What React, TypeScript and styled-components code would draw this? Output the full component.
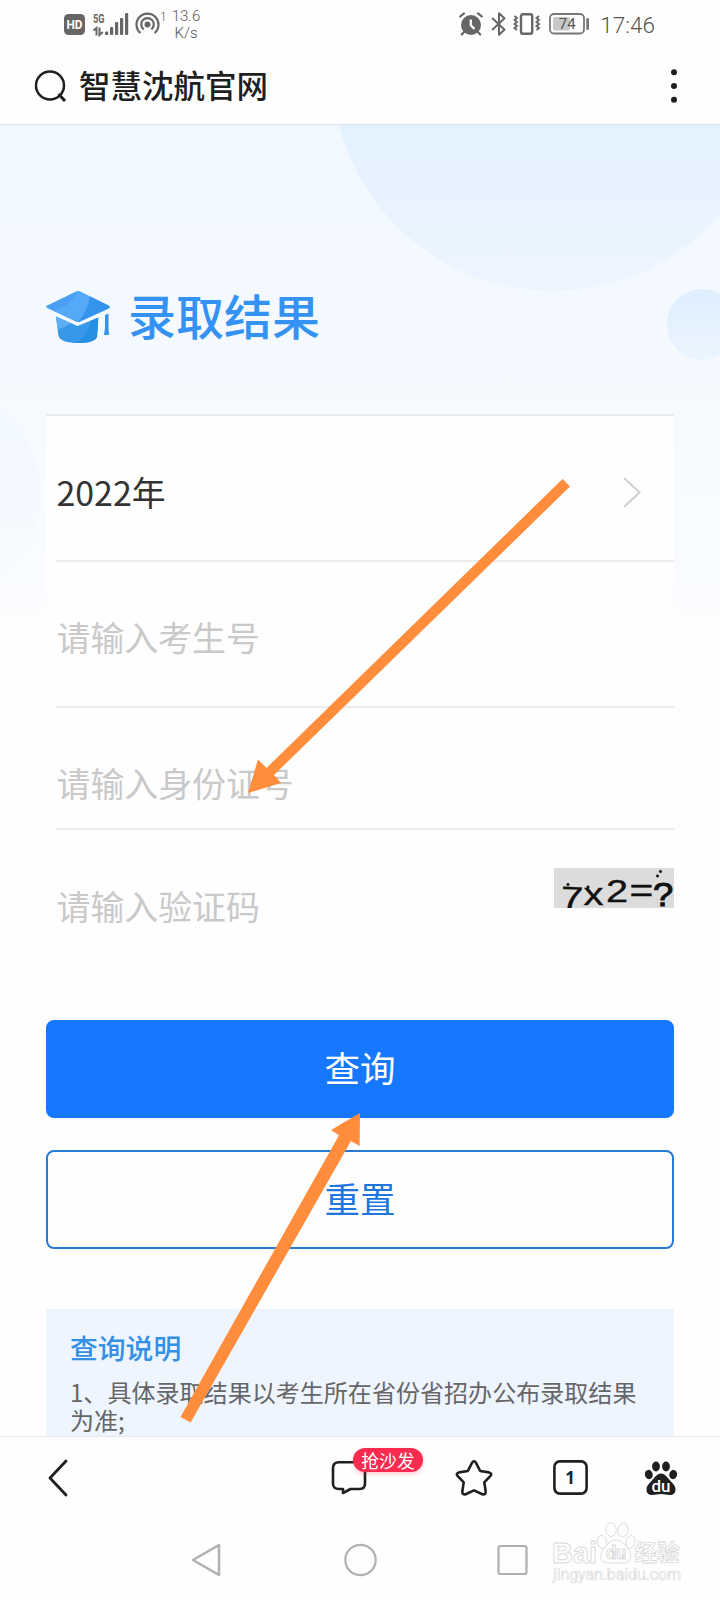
import React from "react";
import styled, { createGlobalStyle } from "styled-components";

const GlobalStyle = createGlobalStyle`
  * { box-sizing: border-box; }
  body {
    margin: 0;
    background: #fefefe;
    font-family: "Noto Sans CJK SC", sans-serif;
  }
  button { font-family: inherit; }
`;

const Screen = styled.div`
  position: relative;
  display: flex;
  flex-direction: column;
  width: 720px;
  height: 1600px;
  overflow: hidden;
  background: #fefefe;
`;

const StatusBar = styled.div`
  display: flex;
  justify-content: space-between;
  align-items: center;
  height: 48px;
  padding: 0 65px 0 63.5px;
  color: #666;
  font-family: Roboto, sans-serif;
`;

const StatusGroup = styled.div`
  display: flex;
  align-items: center;
  height: 48px;
`;

const StatusIcon = styled.svg<{ $gap?: number }>`
  display: block;
  flex: none;
  overflow: visible;
  margin-right: ${(p) => p.$gap ?? 0}px;
`;

const Speed = styled.div`
  display: flex;
  flex-direction: column;
  align-items: center;
  width: 30px;
  margin-top: 2px;
  font-size: 15px;
  font-weight: 300;
  line-height: 17.5px;
  color: #555;
`;

const Clock = styled.span`
  font-size: 22.5px;
  font-weight: 300;
  line-height: 24px;
  color: #555;
  margin-top: 2px;
`;

const Header = styled.header`
  display: flex;
  align-items: center;
  height: 77px;
  padding: 0 42px 0 34px;
  border-bottom: 1px solid #dfe4ea;
`;

const SiteTitle = styled.h1`
  flex: 1;
  margin: -5px 0 0 11px;
  font-size: 31.5px;
  font-weight: 500;
  line-height: 46px;
  color: #1f1f1f;
`;

const Page = styled.main`
  position: relative;
  height: 1311px;
  padding: 0 46px;
  overflow: hidden;
`;

const Backdrop = styled.svg`
  position: absolute;
  inset: 0 auto auto 0;
`;

const Hero = styled.div`
  position: relative;
  display: flex;
  align-items: center;
  height: 289px;
  padding-top: 93px;
`;

const HeroTitle = styled.h2`
  margin: 0 0 0 17px;
  font-size: 48px;
  font-weight: 500;
  line-height: 60px;
  color: #3492f4;
`;

const HeroRow = styled.div`
  display: flex;
  align-items: center;
  height: 60px;
  margin-bottom: 5px;
`;

const Cap = styled.svg`
  margin-top: 6px;
`;

const Form = styled.div`
  position: relative;
  background: #fefefe;
  border-top: 2px solid #ececee;
  height: 542px;
`;

const Field = styled.div<{ $height: number; $shift?: number; $filled?: boolean }>`
  display: flex;
  align-items: center;
  justify-content: space-between;
  height: ${(p) => p.$height}px;
  margin-left: 10px;
  padding-left: 0.5px;
  padding-top: ${(p) => p.$shift ?? 0}px;
  font-size: 33.9px;
  line-height: 44px;
  color: ${(p) => (p.$filled ? "#333" : "#c9c9c9")};
  & + & { border-top: 2px solid #ececee; }
`;

const Chevron = styled.svg`
  margin: 2px 33px 0 0;
`;

const Captcha = styled.svg`
  display: block;
  background: #dcdcdc;
  margin-top: -36px;
`;

const Actions = styled.div`
  position: relative;
  display: flex;
  flex-direction: column;
  gap: 32px;
  margin-top: 64px;
`;

const ActionButton = styled.button<{ $primary?: boolean }>`
  height: ${(p) => (p.$primary ? 98 : 99)}px;
  padding: 0 0 ${(p) => (p.$primary ? 4 : 3)}px;
  border-radius: 8px;
  border: 2px solid ${(p) => (p.$primary ? "#1678ff" : "#2878d4")};
  background: ${(p) => (p.$primary ? "#1678ff" : "#fefefe")};
  color: ${(p) => (p.$primary ? "#fff" : "#1f76df")};
  font-size: 35.5px;
  line-height: 46px;
`;

const Notice = styled.section`
  position: relative;
  height: 140px;
  margin-top: 60px;
  padding: 18px 24px 0;
  background: #eef5fe;
`;

const NoticeTitle = styled.h3`
  margin: 0 0 11px;
  font-size: 27.8px;
  font-weight: 500;
  line-height: 40px;
  color: #3490e6;
`;

const NoticeText = styled.p`
  margin: 0;
  font-size: 24.05px;
  line-height: 28px;
  color: #666;
  white-space: nowrap;
`;

const Toolbar = styled.nav`
  display: flex;
  align-items: center;
  height: 84px;
  padding: 0 42px 2px 47px;
  border-top: 1px solid #e4e6ea;
`;

const Spacer = styled.div`
  flex: 1;
`;

const ChatButton = styled.div`
  position: relative;
  width: 36px;
  height: 36px;
  margin-right: 87px;
`;

const Badge = styled.span`
  position: absolute;
  left: 22px;
  top: -12px;
  width: 70px;
  height: 24.5px;
  border-radius: 12px;
  background: #fb2b50;
  box-shadow: 0 2px 4px rgba(251, 43, 80, 0.25);
  color: #fff;
  font-size: 17.8px;
  line-height: 24px;
  text-align: center;
`;

const ToolIcon = styled.svg<{ $gap?: number }>`
  display: block;
  flex: none;
  margin-right: ${(p) => p.$gap ?? 0}px;
`;

const SystemNav = styled.div`
  display: flex;
  align-items: center;
  justify-content: space-between;
  height: 80px;
  padding: 0 191px 0 190px;
`;

const Watermark = styled.svg`
  position: absolute;
  left: 549px;
  top: 1516px;
`;

const Annotations = styled.svg`
  position: absolute;
  left: 0;
  top: 0;
  pointer-events: none;
`;

function HdIcon() {
  return (
    <StatusIcon $gap={8} width="21" height="21" viewBox="0 0 21 21">
      <rect width="21" height="21" rx="4.5" fill="#666" />
      <text x="10.5" y="15.4" textAnchor="middle" fontFamily="Roboto, sans-serif" fontSize="13.5" fontWeight="700" fill="#fff" textLength="16" lengthAdjust="spacingAndGlyphs">HD</text>
    </StatusIcon>
  );
}

function SignalIcon() {
  return (
    <StatusIcon $gap={7} width="36" height="24" viewBox="0 0 36 24">
      <text x="0" y="10.5" fontFamily="Roboto, sans-serif" fontSize="13.5" fontWeight="700" fill="#666" textLength="11.5" lengthAdjust="spacingAndGlyphs">5G</text>
      <path d="M0.5 18.5L3.5 16V23.5M6.5 15.5V23L9.8 20" fill="none" stroke="#666" strokeWidth="2" />
      <g fill="#666">
        <rect x="12" y="19.5" width="3.2" height="3.5" rx="1" />
        <rect x="17" y="15" width="3.2" height="8" rx="1" />
        <rect x="22" y="10" width="3.2" height="13" rx="1" />
        <rect x="27" y="6" width="3.2" height="17" rx="1" />
        <rect x="32" y="1" width="3.2" height="22" rx="1" />
      </g>
    </StatusIcon>
  );
}

function HotspotIcon() {
  return (
    <StatusIcon $gap={3.5} width="32" height="26" viewBox="0 0 32 26">
      <circle cx="11.5" cy="13.5" r="3" fill="#666" />
      <path d="M4.4 22A11 11 0 1 1 18.600 22M7.700 18.400A6.300 6.300 0 1 1 15.300 18.400" fill="none" stroke="#666" strokeWidth="2.2" />
      <text x="24" y="10" fontFamily="Roboto, sans-serif" fontSize="12" fontWeight="300" fill="#555">1</text>
    </StatusIcon>
  );
}

function AlarmIcon() {
  return (
    <StatusIcon $gap={7.5} width="24" height="24" viewBox="0 0 24 24">
      <circle cx="12" cy="13" r="10" fill="#666" />
      <path d="M1.2 4.5L5 1.4M22.8 4.5L19 1.4M5 20L2.8 22.5M19 20L21.2 22.5" stroke="#666" strokeWidth="2.2" strokeLinecap="round" />
      <path d="M11.8 7.5V13.2L15.5 17" fill="none" stroke="#fff" strokeWidth="2.2" />
    </StatusIcon>
  );
}

function BluetoothIcon() {
  return (
    <StatusIcon $gap={7} width="15" height="26" viewBox="0 0 15 26">
      <path d="M1.2 7L13.5 18.8L8 23.8V2.2L13.5 7.2L1.2 19" fill="none" stroke="#666" strokeWidth="2" strokeLinejoin="round" />
    </StatusIcon>
  );
}

function VibrateIcon() {
  return (
    <StatusIcon $gap={8} width="28" height="24" viewBox="0 0 28 24">
      <rect x="8" y="2.2" width="11.2" height="19.6" rx="2" fill="none" stroke="#666" strokeWidth="2.4" />
      <path d="M1.500 4L4 6L1.500 8L4 10L1.500 12L4 14L1.500 16L4 18M26 4L23.500 6L26 8L23.500 10L26 12L23.500 14L26 16L23.500 18" fill="none" stroke="#666" strokeWidth="1.9" />
    </StatusIcon>
  );
}

function BatteryIcon() {
  return (
    <StatusIcon $gap={10.5} width="41" height="22" viewBox="0 0 41 22">
      <rect x="1" y="1" width="34" height="19.5" rx="4" fill="#fefefe" stroke="#777" strokeWidth="1.8" />
      <rect x="4" y="4" width="17" height="13.5" rx="2" fill="#c8c8c8" />
      <text x="18.3" y="16" textAnchor="middle" fontFamily="Roboto, sans-serif" fontSize="15" fill="#555">74</text>
      <rect x="37.3" y="5" width="2.7" height="12" rx="1.3" fill="#777" />
    </StatusIcon>
  );
}

function CapIcon() {
  return (
    <Cap width="65" height="54" viewBox="0 0 65 54">
      <defs>
        <clipPath id="capBoard">
          <path d="M30 1.6Q32 .6 34 1.6L62.5 15.5Q64.8 17 62.5 18.4L34 31.4Q32 32.4 30 31.4L1.2 18Q-.8 16.6 1.2 15.4Z" />
        </clipPath>
        <clipPath id="capBody">
          <path d="M10 26.500L31.500 36L52.500 27.500L51 47Q48 53 32 53Q15 53 12.5 46Z" />
        </clipPath>
      </defs>
      <g clipPath="url(#capBoard)">
        <rect width="65" height="34" fill="#4b9ff2" />
        <path d="M32 0Q27 15 8 21L32 33Q44 22 45 7Z" fill="#56a9f8" />
        <path d="M44 6Q42 22 30 34L65 22V14Z" fill="#3493ea" />
      </g>
      <g clipPath="url(#capBody)">
        <rect width="65" height="54" fill="#3798ea" />
        <path d="M8 24L25 33Q18 38 11 40Z" fill="#5eaef3" />
        <path d="M52 26V54H28Q42 46 45 30Z" fill="#2590e2" />
      </g>
      <path d="M59 25L62.5 23.5V38L63 45H58L59 38Z" fill="#3394e8" />
    </Cap>
  );
}

function PageBackdrop() {
  return (
    <Backdrop width="720" height="620" viewBox="0 0 720 620">
      <defs>
        <linearGradient id="sky" x1="0" y1="0" x2="0" y2="1">
          <stop offset="0" stopColor="#f1f8ff" />
          <stop offset="0.45" stopColor="#f6faff" />
          <stop offset="0.75" stopColor="#fafcff" />
          <stop offset="0.84" stopColor="#fefefe" />
        </linearGradient>
        <linearGradient id="bigDisc" x1="0" y1="0.6" x2="0" y2="1">
          <stop offset="0" stopColor="#e3f1ff" />
          <stop offset="1" stopColor="#edf5ff" />
        </linearGradient>
        <linearGradient id="smallDisc" x1="0" y1="0" x2="0" y2="1">
          <stop offset="0" stopColor="#deeeff" />
          <stop offset="1" stopColor="#ebf5ff" />
        </linearGradient>
        <linearGradient id="sideDisc" x1="0" y1="0" x2="0" y2="1">
          <stop offset="0" stopColor="#f1f8ff" />
          <stop offset="1" stopColor="#f8fbff" />
        </linearGradient>
      </defs>
      <rect width="720" height="620" fill="url(#sky)" />
      <circle cx="553" cy="-55" r="221" fill="url(#bigDisc)" />
      <circle cx="702" cy="199.500" r="35.5" fill="url(#smallDisc)" />
      <circle cx="-67" cy="369" r="108" fill="url(#sideDisc)" />
    </Backdrop>
  );
}

function CaptchaImage() {
  return (
    <Captcha width="120" height="40" viewBox="0 0 120 40" fontFamily="Liberation Sans, sans-serif" fill="#111" stroke="#111" strokeWidth="0.4">
      <text transform="translate(6.500 40) rotate(2) scale(1.3 1)" fontSize="31">7</text>
      <text transform="translate(29.500 37) scale(1.25 1)" fontSize="32">x</text>
      <text transform="translate(52 33.500) scale(1.3 1)" fontSize="30.500">2</text>
      <text transform="translate(75.500 33.500) scale(1.2 1)" fontSize="34">=</text>
      <text transform="translate(99 37.500) scale(1.1 1)" fontSize="33" strokeWidth="1">?</text>
      <circle cx="14" cy="16.500" r="1.3" />
      <circle cx="34" cy="19" r="1.3" />
      <circle cx="103.500" cy="8" r="1.3" />
      <circle cx="106.500" cy="3.500" r="1.3" />
    </Captcha>
  );
}

function PawIcon() {
  return (
    <ToolIcon width="34" height="36" viewBox="0 0 34 36">
      <g fill="#1f1f1f">
        <ellipse cx="12" cy="6.5" rx="3.9" ry="5" />
        <ellipse cx="22" cy="6.500" rx="3.900" ry="5" />
        <ellipse cx="4.800" cy="14.500" rx="3.900" ry="4.700" transform="rotate(-12 4.800 14.500)" />
        <ellipse cx="29.200" cy="14.500" rx="3.900" ry="4.700" transform="rotate(12 29.200 14.500)" />
        <path d="M17 13.500C21 13.500 23.500 17.500 26 20.500C29.500 24 31.500 26 31.500 29.500C31.500 33.500 29 35 26 35C22.500 35 20.500 34 17 34C13.500 34 11.500 35 8 35C5 35 2.500 33.500 2.500 29.500C2.500 26 4.500 24 8 20.500C10.500 17.500 13 13.500 17 13.500Z" />
      </g>
      <text x="17" y="32" textAnchor="middle" fontFamily="Roboto, sans-serif" fontSize="17" fontWeight="500" fill="#fff">du</text>
    </ToolIcon>
  );
}

function BaiduWatermark() {
  return (
    <Watermark width="150" height="72" viewBox="0 0 150 72" fill="#fefefe" stroke="#d9d9d9" strokeWidth="0.9">
      <text x="3" y="46.500" fontFamily="Liberation Sans, sans-serif" fontWeight="700" fontSize="30" textLength="45" lengthAdjust="spacingAndGlyphs">Bai</text>
      <ellipse cx="62" cy="13.500" rx="5.200" ry="7" />
      <ellipse cx="74" cy="14" rx="5" ry="7" transform="rotate(12 74 14)" />
      <ellipse cx="53" cy="26" rx="4.700" ry="6.500" transform="rotate(-10 53 26)" />
      <ellipse cx="81.500" cy="26" rx="4.500" ry="6.500" transform="rotate(15 81.500 26)" />
      <path d="M67 24C73 24 76 29 79 33C83 37 83 47 75 47H59C50 47 50 38 55 33C58 29 61 24 67 24Z" />
      <text x="67" y="43" textAnchor="middle" fontFamily="Roboto, sans-serif" fontWeight="700" fontSize="18">du</text>
      <text x="85.500" y="45" fontFamily="Noto Sans CJK SC, sans-serif" fontWeight="700" fontSize="22.500" strokeWidth="0.8">经验</text>
      <text x="4" y="63.500" fontFamily="Roboto, sans-serif" fontSize="16" textLength="128" stroke="#dedede" strokeWidth="0.7">jingyan.baidu.com</text>
    </Watermark>
  );
}

export default function App() {
  return (
    <>
      <GlobalStyle />
      <Screen>
        <StatusBar>
          <StatusGroup>
            <HdIcon />
            <SignalIcon />
            <HotspotIcon />
            <Speed>
              <span>13.6</span>
              <span>K/s</span>
            </Speed>
          </StatusGroup>
          <StatusGroup>
            <AlarmIcon />
            <BluetoothIcon />
            <VibrateIcon />
            <BatteryIcon />
            <Clock>17:46</Clock>
          </StatusGroup>
        </StatusBar>

        <Header>
          <svg width="34" height="34" viewBox="0 0 34 34" fill="none" stroke="#1f1f1f" strokeWidth="2.500">
            <circle cx="16" cy="16.500" r="14" />
            <path d="M24.500 25L31 32" strokeWidth="3" />
          </svg>
          <SiteTitle>智慧沈航官网</SiteTitle>
          <svg width="8" height="34" viewBox="0 0 8 34" fill="#1f1f1f">
            <circle cx="4" cy="3.300" r="3" />
            <circle cx="4" cy="17" r="3" />
            <circle cx="4" cy="30.700" r="3" />
          </svg>
        </Header>

        <Page>
          <PageBackdrop />
          <Hero>
            <HeroRow>
              <CapIcon />
              <HeroTitle>录取结果</HeroTitle>
            </HeroRow>
          </Hero>

          <Form>
            <Field $height={144} $shift={7} $filled>
              <span>2022年</span>
              <Chevron width="18" height="31" viewBox="0 0 18 31" fill="none" stroke="#cfcfcf" strokeWidth="2">
                <path d="M1 1L16.500 15.500L1 30" />
              </Chevron>
            </Field>
            <Field $height={146} $shift={6}>
              <span>请输入考生号</span>
            </Field>
            <Field $height={122} $shift={30}>
              <span>请输入身份证号</span>
            </Field>
            <Field $height={130} $shift={23}>
              <span>请输入验证码</span>
              <CaptchaImage />
            </Field>
          </Form>

          <Actions>
            <ActionButton $primary>查询</ActionButton>
            <ActionButton>重置</ActionButton>
          </Actions>

          <Notice>
            <NoticeTitle>查询说明</NoticeTitle>
            <NoticeText>
              1、具体录取结果以考生所在省份省招办公布录取结果
              <br />
              为准;
            </NoticeText>
          </Notice>
        </Page>

        <Toolbar>
          <ToolIcon width="22" height="38" viewBox="0 0 22 38" fill="none" stroke="#1f1f1f" strokeWidth="2.800" strokeLinecap="round" strokeLinejoin="round">
            <path d="M19 2L3 19L19 36" />
          </ToolIcon>
          <Spacer />
          <ChatButton>
            <ToolIcon width="36" height="36" viewBox="0 0 36 36" fill="none" stroke="#1f1f1f" strokeWidth="2.600" strokeLinejoin="round">
              <path d="M8 2.300H28.500Q34 2.300 34 8V23.500Q34 29 28.500 29H19.500L12 33V29H8Q2 29 2 23.500V8Q2 2.300 8 2.300Z" />
            </ToolIcon>
            <Badge>抢沙发</Badge>
          </ChatButton>
          <ToolIcon $gap={59} width="40" height="38" viewBox="0 0 40 38" fill="none" stroke="#1f1f1f" strokeWidth="2.600" strokeLinejoin="round">
            <path d="M18 3.800Q20 .700 22 3.800L26.200 12L35 13.400Q38.700 14.300 36.200 17.200L30.300 23.400L31.700 32.500Q31.700 36 28.300 35.200L20 31.400L11.700 35.200Q8.300 36 8.300 32.500L9.700 23.400L3.800 17.200Q1.300 14.300 5 13.400L13.800 12Z" />
          </ToolIcon>
          <ToolIcon $gap={56} width="35" height="35" viewBox="0 0 35 35">
            <rect x="1.400" y="1.400" width="32.200" height="32.200" rx="5.500" fill="none" stroke="#1f1f1f" strokeWidth="2.600" />
            <text x="17" y="23.500" textAnchor="middle" fontFamily="Noto Sans, sans-serif" fontSize="17" fontWeight="700" fill="#1f1f1f">1</text>
          </ToolIcon>
          <PawIcon />
        </Toolbar>

        <SystemNav>
          <svg width="32" height="36" viewBox="0 0 32 36" fill="none" stroke="#b0b0b0" strokeWidth="2.500" strokeLinejoin="round">
            <path d="M29 3V33L3 18Z" />
          </svg>
          <svg width="34" height="34" viewBox="0 0 34 34" fill="none" stroke="#b0b0b0" strokeWidth="2.200">
            <circle cx="17.500" cy="17" r="15.200" />
          </svg>
          <svg width="32" height="32" viewBox="0 0 32 32" fill="none" stroke="#b0b0b0" strokeWidth="2.200">
            <rect x="1.500" y="2" width="28" height="28" rx="2" />
          </svg>
        </SystemNav>

        <BaiduWatermark />

        <Annotations width="720" height="1600" viewBox="0 0 720 1600" fill="#ff8d3c">
          <path d="M562.500 479L570 486.500L274 775L281 783L248 793L258 759.500L266.500 768Z" />
          <path d="M360 1113L331 1130L339 1135.300L180.500 1417L190.600 1422.600L351 1141L359.600 1146Z" />
        </Annotations>
      </Screen>
    </>
  );
}
